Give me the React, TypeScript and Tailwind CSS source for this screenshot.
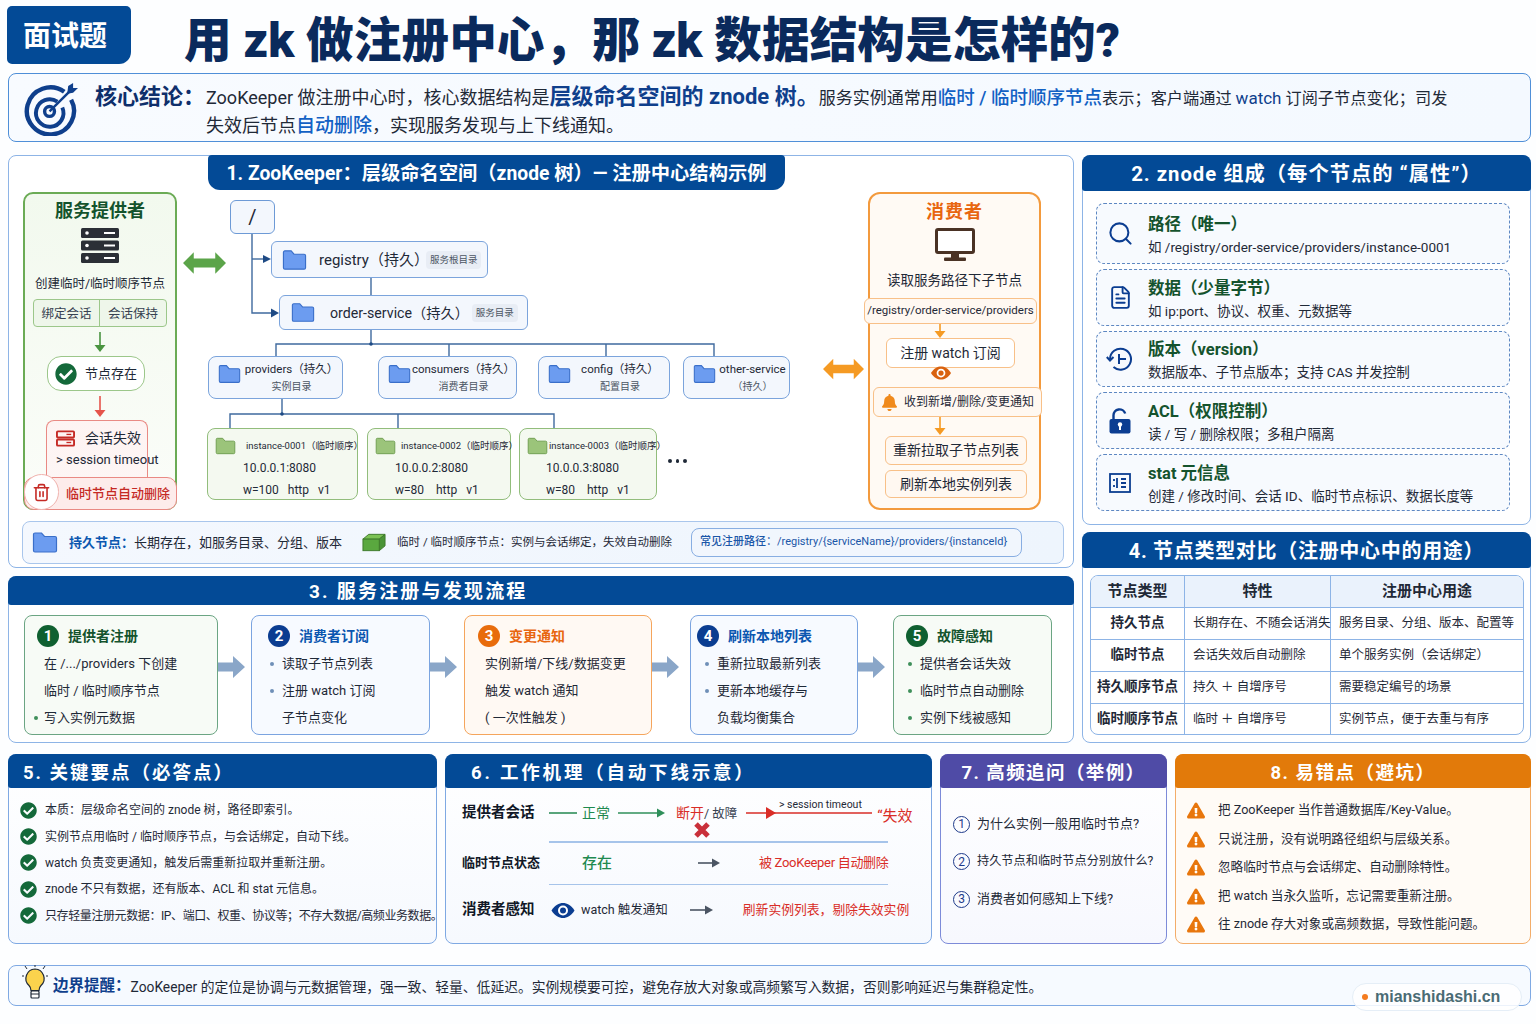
import type { ReactNode } from "react";
import { FaCheckCircle, FaExclamationTriangle, FaBell } from "react-icons/fa";
import { Search, FileText, Trash2 } from "lucide-react";

function Folder({ className, fill = "#6c9cf0", stroke = "#3a6fc9" }: { className: string; fill?: string; stroke?: string }) {
    return (
        <svg viewBox="0 0 26 22" className={`shrink-0 ${className}`}>
            <path d="M1.5 3A1.5 1.5 0 0 1 3 1.5h6.5l3 3.5H23A1.5 1.5 0 0 1 24.5 6.5V19a1.5 1.5 0 0 1-1.5 1.5H3A1.5 1.5 0 0 1 1.5 19z" fill={fill} stroke={stroke} strokeWidth="1.2" />
        </svg>
    );
}

function Eye({ className, color, pupil }: { className: string; color: string; pupil: string }) {
    return (
        <svg viewBox="0 0 24 16" className={className}>
            <path d="M0.5 8C4 2.5 8 0.5 12 0.5S20 2.5 23.5 8C20 13.5 16 15.5 12 15.5S4 13.5 0.5 8z" fill={color} />
            <circle cx="12" cy="8" r="5" fill="#fff" />
            <circle cx="12" cy="8" r="3" fill={pupil} />
        </svg>
    );
}

function LineArrow({ w, color, head = true }: { w: number; color: string; head?: boolean }) {
    return (
        <svg width={w} height="12" viewBox={`0 0 ${w} 12`} className="shrink-0">
            <line x1="0" y1="6" x2={head ? w - 4 : w} y2="6" stroke={color} strokeWidth="1.6" />
            {head && <path d={`M${w - 8} 1.5L${w} 6L${w - 8} 10.5z`} fill={color} />}
        </svg>
    );
}

function DownArrow({ color, h }: { color: string; h: number }) {
    return (
        <svg width="14" height={h} viewBox={`0 0 14 ${h}`} className="block">
            <line x1="7" y1="0" x2="7" y2={h - 5} stroke={color} strokeWidth="1.6" />
            <path d={`M1.5 ${h - 7}L7 ${h}L12.5 ${h - 7}z`} fill={color} />
        </svg>
    );
}

function BigArrow({ color, className }: { color: string; className: string }) {
    return (
        <svg viewBox="0 0 44 24" className={className}>
            <path d="M0 12L11 1V7.5H33V1L44 12L33 23V16.5H11V23z" fill={color} />
        </svg>
    );
}

function FlowArrow() {
    return (
        <svg viewBox="0 0 27 22" className="w-[27px] h-[22px]">
            <path d="M0 6.5H15V0L27 11L15 22V15.5H0z" fill="#8aa6c8" />
        </svg>
    );
}

function Head({ children, className = "bg-[#034a96]" }: { children: ReactNode; className?: string }) {
    return (
        <div className={`-mx-px -mt-px flex items-center justify-center rounded-t-lg rounded-b-[3px] font-bold text-white ${className}`}>
            {children}
        </div>
    );
}

function Node({ pos, title, sub }: { pos: string; title: string; sub: string }) {
    return (
        <div className={`absolute h-[43px] flex items-center rounded-lg border-[1.5px] border-[#7ba4dc] bg-[#f3f7fd] ${pos}`}>
            <Folder className="ml-[9px] w-[23px] h-[20px] -mt-[8px]" />
            <div className="flex-1 text-center leading-[18px]">
                <div className="text-[11.5px] text-[#1f2937] whitespace-nowrap">{title}</div>
                <div className="text-[10px] text-[#4b5563]">{sub}</div>
            </div>
        </div>
    );
}

function Instance({ pos, name, addr, meta, nameAt, textAt }: { pos: string; name: string; addr: string; meta: string; nameAt: string; textAt: string }) {
    return (
        <div className={`absolute top-[236px] h-[72px] rounded-lg border-[1.5px] border-[#92bd7c] bg-[#f4f9f0] ${pos}`}>
            <div className="flex items-center h-[28px] pl-[7px] pt-[6px]">
                <Folder className="w-[21px] h-[18px]" fill="#9bc47a" stroke="#6f9f52" />
                <span className={`text-[9.5px] text-[#1f2937] whitespace-nowrap ${nameAt}`}>{name}</span>
            </div>
            <div className={`text-[12px] leading-[22px] text-[#1f2937] whitespace-pre ${textAt}`}>{addr}{"\n"}{meta}</div>
        </div>
    );
}

function Tree() {
    return (
        <div className="relative flex-1 h-full">
            <svg viewBox="177 192 691 318" className="absolute inset-0 w-full h-full">
                <g fill="none" stroke="#3f6a9e" strokeWidth="1.4">
                    <path d="M252 234V313H272" />
                    <path d="M252 259H265" />
                    <path d="M371 278V295" />
                    <path d="M371 330V344M276 356V344H714V356M449 344V356M606 344V356" />
                    <path d="M282 399V414M230 428V414H554V428M398 414V428" />
                </g>
                <path d="M263 255L271 259L263 263z" fill="#1e4a84" />
                <path d="M271 308.5L279 313L271 317.5z" fill="#1e4a84" />
                <circle cx="371" cy="344" r="1.8" fill="#1e4a84" />
                <circle cx="282" cy="414" r="1.8" fill="#1e4a84" />
            </svg>
            <BigArrow color="#5ba449" className="absolute left-[6px] top-[59px] w-[43px] h-[24px]" />
            <BigArrow color="#f59a23" className="absolute left-[646px] top-[165px] w-[41px] h-[24px]" />

            <div className="absolute left-[53px] top-[8px] w-[45px] h-[34px] flex items-center justify-center rounded-md border-[1.5px] border-[#6d9ad6] bg-[#f3f7fd] text-[20px] text-[#1f2937]">/</div>

            <div className="absolute left-[94px] top-[49px] w-[217px] h-[37px] flex items-center rounded-md border-[1.5px] border-[#7ba4dc] bg-[#f3f7fd]">
                <Folder className="ml-[10px] w-[25px] h-[22px]" />
                <span className="ml-[12px] pt-[2px] text-[15px] text-[#1f2937] whitespace-nowrap">registry（持久）</span>
                <span className="-ml-[3px] px-[4px] rounded-sm bg-[#e8edf5] text-[9.5px] leading-[18px] text-[#4b5563] whitespace-nowrap">服务根目录</span>
            </div>
            <div className="absolute left-[102px] top-[103px] w-[249px] h-[35px] flex items-center rounded-md border-[1.5px] border-[#7ba4dc] bg-[#f3f7fd]">
                <Folder className="ml-[11px] w-[24px] h-[21px]" />
                <span className="ml-[15px] pt-[2px] text-[14.2px] text-[#1f2937] whitespace-nowrap">order-service（持久）</span>
                <span className="ml-[3px] px-[4px] rounded-sm bg-[#e8edf5] text-[9.5px] leading-[18px] text-[#4b5563] whitespace-nowrap">服务目录</span>
            </div>

            <Node pos="left-[31px] top-[164px] w-[135px]" title="providers（持久）" sub="实例目录" />
            <Node pos="left-[201px] top-[164px] w-[139px]" title="consumers（持久）" sub="消费者目录" />
            <Node pos="left-[361px] top-[164px] w-[132px]" title="config（持久）" sub="配置目录" />
            <Node pos="left-[506px] top-[164px] w-[107px]" title="other-service" sub="（持久）" />

            <Instance pos="left-[30px] w-[151px]" nameAt="ml-[10px]" textAt="pl-[35px]" name="instance-0001（临时顺序）" addr="10.0.0.1:8080" meta="w=100   http   v1" />
            <Instance pos="left-[190px] w-[144px]" nameAt="ml-[5px]" textAt="pl-[27px]" name="instance-0002（临时顺序）" addr="10.0.0.2:8080" meta="w=80    http   v1" />
            <Instance pos="left-[342px] w-[138px]" nameAt="ml-[1px]" textAt="pl-[26px]" name="instance-0003（临时顺序）" addr="10.0.0.3:8080" meta="w=80    http   v1" />
            <div className="absolute left-[491px] top-[267px] flex gap-[4px]">
                <span className="w-[3.5px] h-[3.5px] rounded-full bg-[#1f2937]" />
                <span className="w-[3.5px] h-[3.5px] rounded-full bg-[#1f2937]" />
                <span className="w-[3.5px] h-[3.5px] rounded-full bg-[#1f2937]" />
            </div>
        </div>
    );
}

function Provider() {
    return (
        <div className="w-[154px] h-full rounded-[10px] border-2 border-[#6bab55] bg-gradient-to-b from-[#f2f9ee] to-[#fbfdf9] flex flex-col items-center">
            <div className="h-[32px] leading-[34px] text-[18px] font-bold text-[#14532d]">服务提供者</div>
            <svg viewBox="0 0 38 35" className="mt-[2px] w-[38px] h-[35px]">
                {[0, 12.5, 25].map(y => (
                    <g key={y}>
                        <rect x="0" y={y} width="38" height="10" rx="1.5" fill="#2b2f36" />
                        <circle cx="6" cy={y + 5} r="1.8" fill="#fff" />
                        <rect x="23" y={y + 4} width="11" height="2" fill="#fff" />
                    </g>
                ))}
            </svg>
            <div className="mt-[10px] h-[20px] leading-[22px] text-[12.5px] text-[#1f2937] whitespace-nowrap">创建临时/临时顺序节点</div>
            <div className="mt-[6px] w-[134px] h-[28px] flex rounded border border-[#9cc78a] bg-[#eef6ea] text-[12.5px] leading-[27px] text-[#374151] text-center">
                <div className="w-[66px] border-r border-[#9cc78a]">绑定会话</div>
                <div className="flex-1">会话保持</div>
            </div>
            <div className="mt-[5px] h-[20px]"><DownArrow color="#4a9440" h={20} /></div>
            <div className="mt-[4px] -ml-[8px] w-[98px] h-[35px] flex items-center rounded-[14px] border border-[#9cc78a] bg-white">
                <FaCheckCircle className="ml-[7px] w-[22px] h-[22px] text-[#14693a]" />
                <span className="ml-[8px] text-[13px] text-[#1f2937]">节点存在</span>
            </div>
            <div className="mt-[5px] h-[21px]"><DownArrow color="#e5544b" h={21} /></div>
            <div className="mt-[3px] w-[102px] h-[60px] -ml-[6px] rounded-t-lg border border-b-0 border-[#e98a84] bg-gradient-to-b from-[#fef3f2] to-[#fdf6f5] pl-[9px] pt-[7px]">
                <div className="flex items-center h-[20px]">
                    <svg viewBox="0 0 20 17" className="w-[19px] h-[17px]">
                        <rect x="1" y="1" width="18" height="6.5" rx="1" fill="none" stroke="#c52a25" strokeWidth="2" />
                        <rect x="1" y="9.5" width="18" height="6.5" rx="1" fill="none" stroke="#c52a25" strokeWidth="2" />
                        <line x1="11" y1="4.2" x2="16" y2="4.2" stroke="#c52a25" strokeWidth="1.4" />
                        <line x1="11" y1="12.7" x2="16" y2="12.7" stroke="#c52a25" strokeWidth="1.4" />
                    </svg>
                    <span className="ml-[10px] text-[14px] text-[#1f2937]">会话失效</span>
                </div>
                <div className="mt-[3px] text-[13px] leading-[18px] text-[#1f2937] whitespace-nowrap">&gt; session timeout</div>
            </div>
            <div className="-mt-[3px] -mb-[2px] relative w-[153px] h-[33px] ml-[1px] flex items-center rounded-[10px] border border-[#e98a84] bg-[#fdeceb]">
                <div className="absolute -left-px -top-[4px] w-[35px] h-[36px] flex items-center justify-center rounded-full border border-[#f0b3ae] bg-white">
                    <Trash2 className="w-[19px] h-[19px] text-[#c52a25]" strokeWidth={2} />
                </div>
                <span className="ml-[41px] text-[13px] font-medium text-[#c52a25] whitespace-nowrap">临时节点自动删除</span>
            </div>
        </div>
    );
}

function Consumer() {
    const box = "rounded-md border border-[#f8c088] bg-[#fff8f1] flex items-center justify-center text-[#1f2937] whitespace-nowrap";
    return (
        <div className="w-[173px] h-full rounded-[12px] border-2 border-[#f39a3d] bg-[#fffaf4] flex flex-col">
            <div className="h-[34px] leading-[36px] text-center text-[18px] font-bold text-[#e8660f] tracking-[1px]">消费者</div>
            <svg viewBox="0 0 40 34" className="self-center w-[40px] h-[34px]">
                <rect x="1.5" y="1.5" width="37" height="23" rx="1.5" fill="#fff" stroke="#4a3224" strokeWidth="3" />
                <rect x="16" y="25" width="8" height="5" fill="#4a3224" />
                <rect x="9" y="29.5" width="22" height="3.5" rx="1" fill="#4a3224" />
            </svg>
            <div className="mt-[8px] h-[20px] leading-[20px] text-center text-[13.5px] text-[#1f2937] whitespace-nowrap">读取服务路径下子节点</div>
            <div className={`mt-[8px] -ml-[6px] w-[173px] h-[26px] text-[11.5px] ${box}`}>/registry/order-service/providers</div>
            <div className="ml-[63px] h-[14px]"><DownArrow color="#f59a23" h={14} /></div>
            <div className={`ml-[16px] w-[129px] h-[30px] text-[14px] rounded-lg bg-white ${box}`}>注册 watch 订阅</div>
            <Eye className="relative -mt-[2px] ml-[60px] w-[22px] h-[14px]" color="#d9620f" pupil="#d9620f" />
            <div className={`mt-[7px] ml-[3px] w-[169px] h-[30px] text-[12px] ${box}`}>
                <FaBell className="mr-[6px] w-[17px] h-[17px] shrink-0 text-[#f08a1c]" />
                收到新增/删除/变更通知
            </div>
            <div className="ml-[63px] h-[18px]"><DownArrow color="#f59a23" h={18} /></div>
            <div className={`mt-px ml-[15px] w-[142px] h-[29px] text-[14px] ${box}`}>重新拉取子节点列表</div>
            <div className={`mt-[5px] ml-[15px] w-[142px] h-[28px] text-[14px] ${box}`}>刷新本地实例列表</div>
        </div>
    );
}

function Section1() {
    return (
        <section className="h-[413px] rounded-lg border border-[#8db4e6] bg-white">
            <div className="-mt-px ml-[199px] w-[577px] h-[35px] flex items-center justify-center rounded-b-xl rounded-t-sm bg-[#034a96] pt-[3px] text-[19.3px] font-bold text-white whitespace-nowrap">
                1. ZooKeeper：层级命名空间（znode 树）— 注册中心结构示例
            </div>
            <div className="mt-[2px] ml-[14px] flex h-[318px] w-[1018px]">
                <Provider />
                <Tree />
                <Consumer />
            </div>
            <div className="mt-[11px] ml-[13px] w-[1042px] h-[43px] flex items-center rounded-lg border border-[#a9c6ec] bg-gradient-to-r from-[#f4f8fe] to-[#eef5fd] whitespace-nowrap">
                <Folder className="ml-[9px] w-[26px] h-[23px]" />
                <span className="ml-[11px] text-[13px] font-bold text-[#0b57b0]">持久节点：</span>
                <span className="text-[13px] text-[#1f2937]">长期存在，如服务目录、分组、版本</span>
                <svg viewBox="0 0 25 19" className="ml-[20px] w-[24px] h-[19px] shrink-0">
                    <path d="M1 6L7 1H24L18 6z" fill="#7cc254" stroke="#3f7a2b" />
                    <path d="M18 6L24 1V13L18 18z" fill="#4a9436" stroke="#3f7a2b" />
                    <rect x="1" y="6" width="17" height="12" fill="#5aa83f" stroke="#3f7a2b" />
                </svg>
                <span className="ml-[11px] text-[11.5px] text-[#1f2937]">临时 / 临时顺序节点：实例与会话绑定，失效自动删除</span>
                <span className="ml-[19px] h-[29px] w-[331px] pl-[8px] flex items-center rounded-lg border border-[#88aee2] bg-[#f1f6fd] text-[11px] text-[#1a56a8]">
                    <b className="font-medium">常见注册路径：</b>/registry/{"{serviceName}"}/providers/{"{instanceId}"}
                </span>
            </div>
        </section>
    );
}

const flows = [
    {
        w: "w-[194px]", gap: "w-[33px]", box: "border-[#6ba583] bg-[#f7fbf6]", circle: "bg-[#0f6030]", title: "text-[#14532d]", dot: "bg-[#3f8f5a]", head: "pl-[12px]",
        name: "提供者注册", lines: [{ t: "在 /.../providers 下创建" }, { t: "临时 / 临时顺序节点" }, { t: "写入实例元数据", dot: true }], indent: "pl-[19px]", dotAt: "left-[9px]",
    },
    {
        w: "w-[179px]", gap: "w-[34px]", box: "border-[#7ba4e0] bg-[#f7faff]", circle: "bg-[#0b3d91]", title: "text-[#0b57b0]", dot: "bg-[#6f8fb8]", head: "pl-[16px]",
        name: "消费者订阅", lines: [{ t: "读取子节点列表", dot: true }, { t: "注册 watch 订阅", dot: true }, { t: "子节点变化" }], indent: "pl-[30px]", dotAt: "left-[18px]",
    },
    {
        w: "w-[188px]", gap: "w-[38px]", box: "border-[#f5a55c] bg-[#fff9f3]", circle: "bg-[#e86c0c]", title: "text-[#e8660f]", dot: "", head: "pl-[13px]",
        name: "变更通知", lines: [{ t: "实例新增/下线/数据变更" }, { t: "触发 watch 通知" }, { t: "( 一次性触发 )" }], indent: "pl-[20px]", dotAt: "left-[8px]",
    },
    {
        w: "w-[168px]", gap: "w-[35px]", box: "border-[#7ba4e0] bg-[#f7faff]", circle: "bg-[#0b3d91]", title: "text-[#0b57b0]", dot: "bg-[#6f8fb8]", head: "pl-[6px]",
        name: "刷新本地列表", lines: [{ t: "重新拉取最新列表", dot: true }, { t: "更新本地缓存与", dot: true }, { t: "负载均衡集合" }], indent: "pl-[26px]", dotAt: "left-[14px]",
    },
    {
        w: "w-[159px]", gap: "", box: "border-[#6ba583] bg-[#f7fbf6]", circle: "bg-[#0f6030]", title: "text-[#14532d]", dot: "bg-[#3f8f5a]", head: "pl-[12px]",
        name: "故障感知", lines: [{ t: "提供者会话失效", dot: true }, { t: "临时节点自动删除", dot: true }, { t: "实例下线被感知", dot: true }], indent: "pl-[26px]", dotAt: "left-[14px]",
    },
];

function Section3() {
    return (
        <section className="h-[167px] rounded-lg border border-[#8db4e6] bg-white">
            <Head><div className="w-full h-[29px] leading-[32px] pl-[301px] text-[19px] tracking-[2.2px]">3. 服务注册与发现流程</div></Head>
            <div className="mt-[10px] ml-[15px] flex">
                {flows.map((f, i) => (
                    <div key={f.name} className="flex">
                        <div className={`h-[120px] rounded-lg border ${f.w} ${f.box}`}>
                            <div className={`flex items-center h-[37px] pt-[3px] ${f.head}`}>
                                <span className={`w-[22px] h-[22px] rounded-full flex items-center justify-center text-[15px] font-bold text-white ${f.circle}`}>{i + 1}</span>
                                <span className={`ml-[9px] text-[14px] font-bold whitespace-nowrap ${f.title}`}>{f.name}</span>
                            </div>
                            <div className="-mt-[3px]">
                                {f.lines.map(l => (
                                    <div key={l.t} className={`relative h-[27px] leading-[27px] text-[13px] text-[#1f2937] whitespace-nowrap ${f.indent}`}>
                                        {l.dot && <span className={`absolute top-[12px] w-[4px] h-[4px] rounded-full ${f.dotAt} ${f.dot}`} />}
                                        {l.t}
                                    </div>
                                ))}
                            </div>
                        </div>
                        {f.gap && <div className={`flex items-center pb-[16px] ${f.gap}`}><FlowArrow /></div>}
                    </div>
                ))}
            </div>
        </section>
    );
}

const attrs: { icon: ReactNode; title: string; sub: string; h: string }[] = [
    { icon: <Search className="w-[27px] h-[27px] text-[#0b3d91]" strokeWidth={1.8} />, title: "路径（唯一）", sub: "如  /registry/order-service/providers/instance-0001", h: "h-[61px]" },
    { icon: <FileText className="w-[25px] h-[25px] text-[#0b3d91]" strokeWidth={1.8} />, title: "数据（少量字节）", sub: "如  ip:port、协议、权重、元数据等", h: "h-[57px]" },
    {
        icon: (
            <svg viewBox="0 0 28 24" className="w-[28px] h-[24px]" fill="none" stroke="#0b3d91" strokeWidth="2">
                <path d="M4 12A10.5 10.5 0 1 1 7.5 20" />
                <path d="M0.8 10L4 13.5L7.5 10" />
                <path d="M13 7V17M13 12H20" />
            </svg>
        ), title: "版本（version）", sub: "数据版本、子节点版本；支持 CAS 并发控制", h: "h-[56px]",
    },
    {
        icon: (
            <svg viewBox="0 0 22 26" className="w-[22px] h-[26px]">
                <path d="M4.5 11V7.5a6 6 0 0 1 11.7-2" fill="none" stroke="#0b3d91" strokeWidth="2.4" />
                <rect x="0.5" y="11" width="21" height="14.5" rx="2" fill="#0b3d91" />
                <circle cx="11" cy="16.5" r="2.2" fill="#fff" />
                <rect x="10" y="17" width="2" height="5" fill="#fff" />
            </svg>
        ), title: "ACL（权限控制）", sub: "读 / 写 / 删除权限；多租户隔离", h: "h-[57px]",
    },
    {
        icon: (
            <svg viewBox="0 0 22 20" className="w-[22px] h-[20px]" fill="none" stroke="#0b3d91" strokeWidth="1.8">
                <rect x="1" y="1" width="20" height="18" />
                <path d="M8 5V15M12 6H17M12 10H17M12 14H17M5 6V8M5 12V14" />
            </svg>
        ), title: "stat 元信息", sub: "创建 / 修改时间、会话 ID、临时节点标识、数据长度等", h: "h-[57px]",
    },
];

function Section2() {
    return (
        <section className="h-[370px] rounded-lg border border-[#8db4e6] bg-white">
            <Head><div className="h-[36px] leading-[39px] text-[20.3px] tracking-[1px]">2. znode 组成（每个节点的 “属性”）</div></Head>
            <div className="mt-[12px] ml-[13px] w-[414px] flex flex-col gap-[5px]">
                {attrs.map(a => (
                    <div key={a.title} className={`flex items-center rounded-lg border-[1.5px] border-dashed border-[#5d87c2] bg-[#f7fafe] ${a.h}`}>
                        <div className="w-[51px] pr-[5px] flex justify-center">{a.icon}</div>
                        <div>
                            <div className="h-[26px] text-[16.5px] leading-[28px] font-bold text-[#14532d] whitespace-nowrap">{a.title}</div>
                            <div className="text-[13.5px] leading-[20px] text-[#1f2937] whitespace-nowrap">{a.sub}</div>
                        </div>
                    </div>
                ))}
            </div>
        </section>
    );
}

const compareRows = [
    ["持久节点", "长期存在、不随会话消失", "服务目录、分组、版本、配置等"],
    ["临时节点", "会话失效后自动删除", "单个服务实例（会话绑定）"],
    ["持久顺序节点", "持久 ＋ 自增序号", "需要稳定编号的场景"],
    ["临时顺序节点", "临时 ＋ 自增序号", "实例节点，便于去重与有序"],
];

function Section4() {
    return (
        <section className="h-[211px] rounded-lg border border-[#8db4e6] bg-white">
            <Head><div className="h-[36px] leading-[38px] text-[20px] tracking-[0.7px]">4. 节点类型对比（注册中心中的用途）</div></Head>
            <div className="mt-[7px] ml-[7px] w-[434px] h-[160px] rounded-lg border border-[#8db4e6] overflow-hidden">
                <div className="grid grid-cols-[94px_146px_1fr] h-[31px] bg-[#eaf2fc] text-center text-[15px] leading-[31px] font-bold text-[#1f2937]">
                    <div className="border-r border-[#8db4e6]">节点类型</div>
                    <div className="border-r border-[#8db4e6]">特性</div>
                    <div>注册中心用途</div>
                </div>
                {compareRows.map(r => (
                    <div key={r[0]} className="grid grid-cols-[94px_146px_1fr] h-[32px] border-t border-[#8db4e6] text-[12.5px] leading-[29px] text-[#1f2937] whitespace-nowrap">
                        <div className="border-r border-[#8db4e6] text-center text-[13.5px] font-bold">{r[0]}</div>
                        <div className="border-r border-[#8db4e6] pl-[8px]">{r[1]}</div>
                        <div className="pl-[8px]">{r[2]}</div>
                    </div>
                ))}
            </div>
        </section>
    );
}

const keyPoints = [
    "本质：层级命名空间的 znode 树，路径即索引。",
    "实例节点用临时 / 临时顺序节点，与会话绑定，自动下线。",
    "watch 负责变更通知，触发后需重新拉取并重新注册。",
    "znode 不只有数据，还有版本、ACL 和 stat 元信息。",
    "只存轻量注册元数据：IP、端口、权重、协议等；不存大数据/高频业务数据。",
];

function Section5() {
    return (
        <section className="w-[429px] rounded-lg border border-[#7fa9e3] bg-gradient-to-b from-white to-[#f6f9fe]">
            <Head><div className="w-full h-[34px] leading-[38px] pl-[15px] text-[18.5px] tracking-[2px]">5. 关键要点（必答点）</div></Head>
            <div className="mt-[9px] pl-[11px]">
                {keyPoints.map((p, i) => (
                    <div key={p} className="flex items-center h-[26.4px] text-[12px] text-[#1f2937] whitespace-nowrap">
                        <FaCheckCircle className="w-[17px] h-[17px] shrink-0 text-[#14693a]" />
                        <span className={i === 4 ? "ml-[8px] tracking-[-0.4px]" : "ml-[8px]"}>{p}</span>
                    </div>
                ))}
            </div>
        </section>
    );
}

function Section6() {
    return (
        <section className="w-[487px] rounded-lg border border-[#7fa9e3] bg-gradient-to-b from-white to-[#f6f9fe]">
            <Head><div className="w-full h-[34px] leading-[38px] pl-[26px] text-[18.5px] tracking-[2.8px]">6. 工作机理（自动下线示意）</div></Head>
            <div className="pl-[16px] whitespace-nowrap">
                <div className="relative flex items-center h-[53px] pb-[3px]">
                    <div className="w-[87px] text-[14.5px] font-bold text-[#111827]">提供者会话</div>
                    <LineArrow w={28} color="#2f8f5a" head={false} />
                    <span className="ml-[5px] w-[28px] text-[14px] text-[#1f8a50]">正常</span>
                    <span className="ml-[8px]"><LineArrow w={47} color="#2f8f5a" /></span>
                    <span className="ml-[11px] text-[14px] text-[#d92d27]">断开<span className="text-[#374151] text-[12.5px]">/ 故障</span></span>
                    <span className="ml-[9px]"><LineArrow w={126} color="#d92d27" head={false} /></span>
                    <span className="ml-[5px] mt-[6px] text-[15px] text-[#d92d27]">“失效</span>
                    <span className="absolute left-[317px] top-[9px] text-[10.5px] text-[#1f2937]">&gt; session timeout</span>
                    <svg viewBox="0 0 18 18" className="absolute left-[231px] top-[33px] w-[18px] h-[18px]">
                        <path d="M3 3L15 15M15 3L3 15" stroke="#c9303a" strokeWidth="5" />
                    </svg>
                    <svg viewBox="0 0 10 12" className="absolute left-[304px] top-[19px] w-[10px] h-[12px]">
                        <path d="M0 0L10 6L0 12z" fill="#d92d27" />
                    </svg>
                </div>
                <div className="ml-[87px] w-[339px] h-[1.5px] bg-[#a6c4ea]" />
                <div className="flex items-center h-[41px]">
                    <div className="w-[87px] text-[13px] font-bold text-[#111827]">临时节点状态</div>
                    <span className="ml-[33px] w-[32px] text-[15px] font-medium text-[#1f8a50]">存在</span>
                    <span className="ml-[84px]"><LineArrow w={22} color="#4b5563" /></span>
                    <span className="ml-[39px] text-[13px] tracking-[-0.3px] text-[#d92d27]">被 ZooKeeper 自动删除</span>
                </div>
                <div className="ml-[87px] w-[339px] h-[1.5px] bg-[#a6c4ea]" />
                <div className="flex items-center h-[50px]">
                    <div className="w-[87px] text-[14.5px] font-bold text-[#111827]">消费者感知</div>
                    <Eye className="ml-[2px] w-[24px] h-[17px]" color="#0b3d91" pupil="#0b3d91" />
                    <span className="ml-[6px] text-[12.5px] text-[#1f2937]">watch 触发通知</span>
                    <span className="ml-[22px]"><LineArrow w={23} color="#4b5563" /></span>
                    <span className="ml-[30px] text-[12.8px] text-[#d92d27]">刷新实例列表，剔除失效实例</span>
                </div>
            </div>
        </section>
    );
}

const followUps = ["为什么实例一般用临时节点?", "持久节点和临时节点分别放什么?", "消费者如何感知上下线?"];

function Section7() {
    return (
        <section className="w-[227px] rounded-lg border border-[#7d8bd9] bg-gradient-to-b from-white to-[#f7f8fe]">
            <Head className="bg-[#4f4ba6]"><div className="h-[34px] leading-[38px] text-[18.5px] tracking-[1.4px]">7. 高频追问（举例）</div></Head>
            <div className="mt-[27px] pl-[12px] flex flex-col gap-[19.5px]">
                {followUps.map((q, i) => (
                    <div key={q} className="flex items-center h-[18px] whitespace-nowrap">
                        <span className="w-[17px] h-[17px] rounded-full border border-[#1e3a8a] flex items-center justify-center text-[12px] text-[#1e3a8a]">{i + 1}</span>
                        <span className={i === 1 ? "ml-[7px] text-[12.2px] text-[#1f2937]" : "ml-[7px] text-[13px] text-[#1f2937]"}>{q}</span>
                    </div>
                ))}
            </div>
        </section>
    );
}

const pitfalls = [
    "把 ZooKeeper 当作普通数据库/Key-Value。",
    "只说注册，没有说明路径组织与层级关系。",
    "忽略临时节点与会话绑定、自动删除特性。",
    "把 watch 当永久监听，忘记需要重新注册。",
    "往 znode 存大对象或高频数据，导致性能问题。",
];

function Section8() {
    return (
        <section className="w-[356px] rounded-lg border border-[#f3ad6a] bg-[#fffbf6]">
            <Head className="bg-[#e27a0a]"><div className="h-[34px] leading-[38px] text-[18.5px] tracking-[1.5px]">8. 易错点（避坑）</div></Head>
            <div className="mt-[8.5px] pl-[11px]">
                {pitfalls.map(p => (
                    <div key={p} className="flex items-center h-[28.5px] whitespace-nowrap">
                        <FaExclamationTriangle className="w-[18px] h-[17px] text-[#e8760c]" />
                        <span className="ml-[13px] text-[12.6px] text-[#1f2937]">{p}</span>
                    </div>
                ))}
            </div>
        </section>
    );
}

export default function App() {
    return (
        <div className="relative w-[1536px] h-[1024px] overflow-hidden bg-[#fdfeff] pl-[8px] pr-[5px] pt-[6px] font-['Roboto','Noto_Sans_CJK_SC',sans-serif]">
            <header className="flex items-center h-[58px]">
                <div className="-ml-px w-[124px] h-[58px] flex items-center justify-center rounded-[5px] rounded-br-xl bg-[#034a96] pr-[8px] pt-[4px] text-[28px] font-bold text-white">面试题</div>
                <h1 className="ml-[53px] mt-[14px] text-[47.7px] font-black text-[#0a2a5c] whitespace-nowrap">用 zk 做注册中心，那 zk 数据结构是怎样的?</h1>
            </header>

            <div className="mt-[9px] h-[69px] flex items-start rounded-lg border-[1.5px] border-[#4f8fd8] bg-gradient-to-r from-[#f8fbff] to-[#f4f9ff]">
                <svg viewBox="0 0 56 54" className="ml-[15px] mt-[9px] w-[55px] h-[53px] shrink-0" fill="none" stroke="#0f3f8c">
                    <path d="M41 9A24 24 0 1 0 48 17" strokeWidth="4.5" />
                    <path d="M34 19A14 14 0 1 0 39 25" strokeWidth="4" />
                    <circle cx="26" cy="29" r="5" strokeWidth="3.5" />
                    <path d="M26 29L47 8" strokeWidth="2.5" />
                    <path d="M44 11L45 3L50 0L50 5L55 5L50 10z" fill="#0f3f8c" stroke="none" />
                </svg>
                <div className="ml-[16px] w-[111px] h-[44px] text-[22px] leading-[46px] font-bold text-[#0f2f6b] whitespace-nowrap">核心结论：</div>
                <div className="text-[17.5px] text-[#1f2937] whitespace-nowrap">
                    <div className="h-[29px] mt-[8px] leading-[29px]">
                        <span className="text-[18px]">ZooKeeper 做注册中心时，核心数据结构是</span><span className="text-[22px] font-bold text-[#0f3f8c]">层级命名空间的 znode 树。</span>
                        <span className="text-[17px]">服务实例通常用</span><span className="text-[18.5px] font-medium text-[#1261c4]">临时 / 临时顺序节点</span><span className="text-[16.2px]">表示；客户端通过 <span className="text-[17px] text-[#0f3f8c]">watch</span> 订阅子节点变化；司发</span>
                    </div>
                    <div className="h-[29px] leading-[29px] text-[18px]">
                        失效后节点<span className="text-[19px] font-medium text-[#1261c4]">自动删除</span>，实现服务发现与上下线通知。
                    </div>
                </div>
            </div>

            <div className="mt-[13px] flex gap-[8px]">
                <div className="w-[1066px] flex flex-col gap-[8px]">
                    <Section1 />
                    <Section3 />
                </div>
                <div className="w-[449px] flex flex-col gap-[7px]">
                    <Section2 />
                    <Section4 />
                </div>
            </div>

            <div className="mt-[11px] h-[190px] flex gap-[8px]">
                <Section5 />
                <Section6 />
                <Section7 />
                <Section8 />
            </div>

            <div className="mt-[21px] h-[41px] flex items-center rounded-lg border border-[#7fa9e3] bg-[#f6faff] whitespace-nowrap">
                <svg viewBox="0 0 26 36" className="ml-[13px] -mt-[6px] w-[26px] h-[36px]">
                    <path d="M3 1L5 4M23 1L21 4M13 0V2M0 11H2M24 11H26" stroke="#1f2937" strokeWidth="1" />
                    <path d="M13 4a9.5 9.5 0 0 1 6 16.5c-1.5 1.5-2 3-2 5H9c0-2-.5-3.5-2-5A9.5 9.5 0 0 1 13 4z" fill="#fbd34d" stroke="#1f2937" strokeWidth="1.2" />
                    <rect x="9" y="26" width="8" height="7" rx="1" fill="#fff" stroke="#1f2937" strokeWidth="1.2" />
                    <path d="M9 29H17" stroke="#1f2937" />
                </svg>
                <span className="ml-[5px] pt-[3px] text-[15.5px] font-bold text-[#0f3f8c]">边界提醒：</span>
                <span className="pt-[3px] text-[13.8px] text-[#1f2937]">ZooKeeper 的定位是协调与元数据管理，强一致、轻量、低延迟。实例规模要可控，避免存放大对象或高频繁写入数据，否则影响延迟与集群稳定性。</span>
            </div>

            <div className="absolute left-[1352px] top-[983px] w-[170px] h-[28px] flex items-center rounded-full border border-[#e5eef7] bg-white/85">
                <span className="ml-[9px] w-[6px] h-[6px] rounded-full bg-[#f57c1f]" />
                <span className="ml-[7px] text-[16px] font-bold text-[#4a6b74] font-['Liberation_Sans',sans-serif]">mianshidashi.cn</span>
            </div>
        </div>
    );
}
